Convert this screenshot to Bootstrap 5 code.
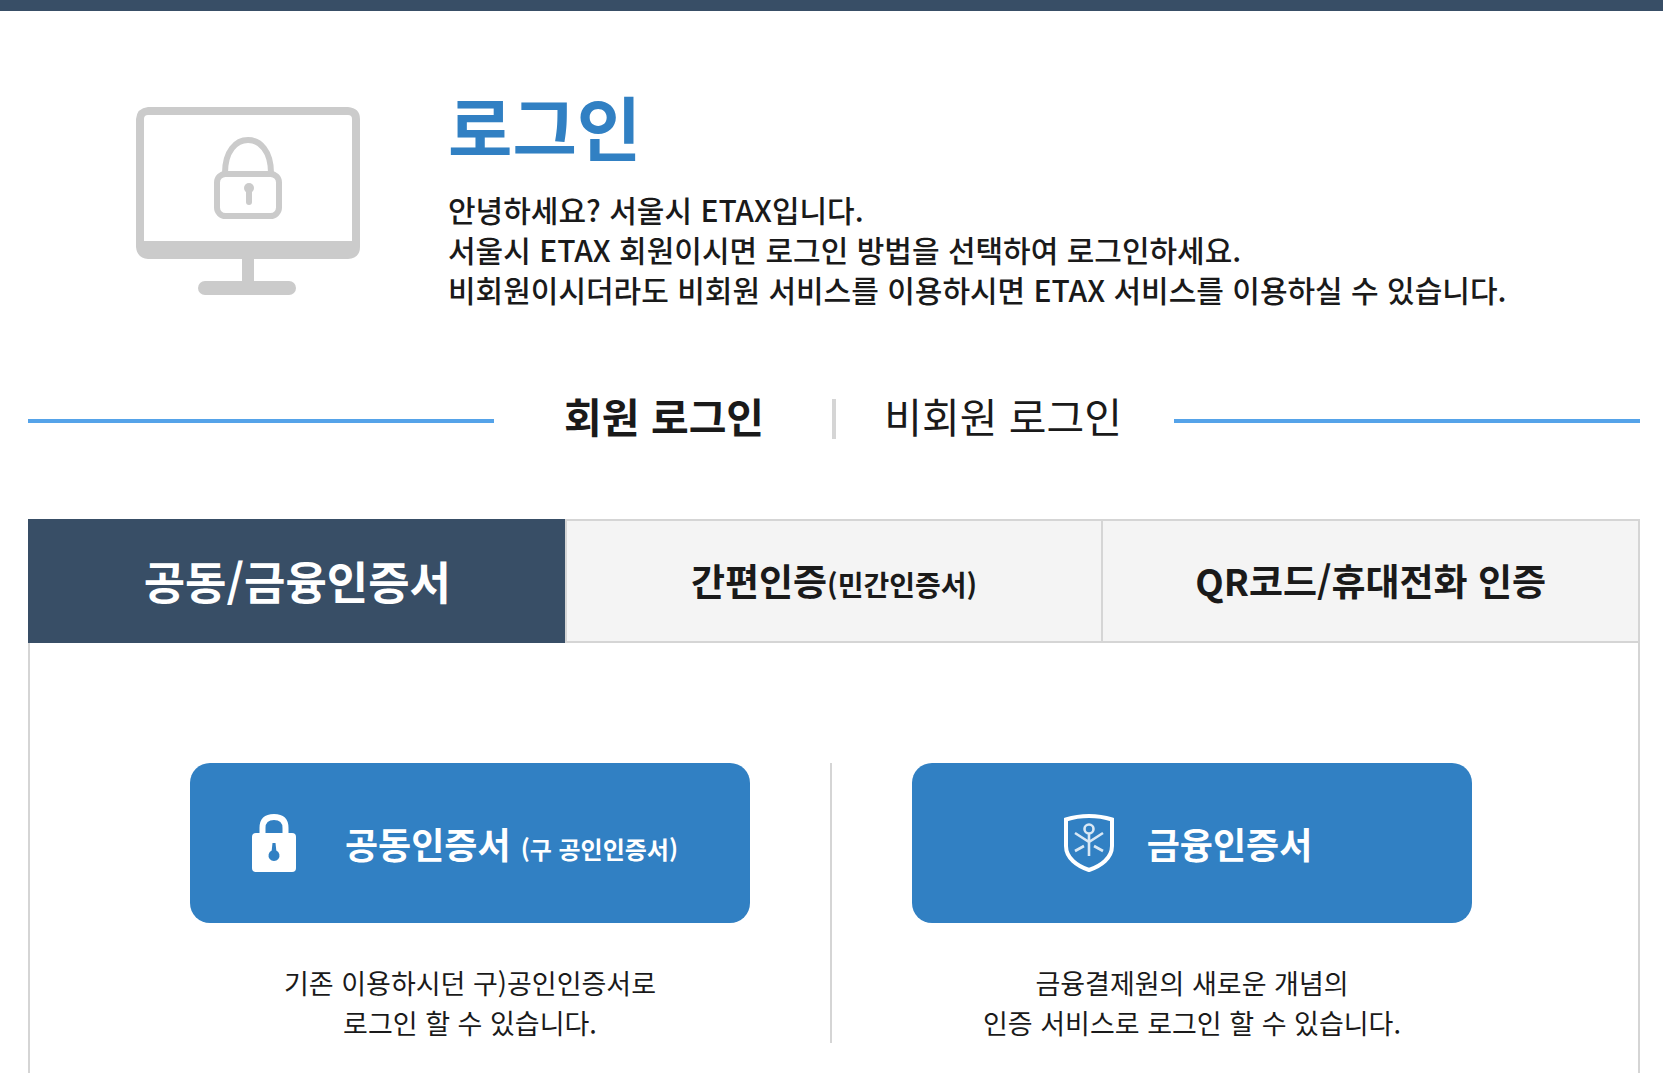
<!DOCTYPE html>
<html lang="ko">
<head>
<meta charset="utf-8">
<meta name="viewport" content="width=device-width, initial-scale=1">
<title>로그인 - 서울시 ETAX</title>
<link href="https://cdn.jsdelivr.net/npm/bootstrap@5.3.0/dist/css/bootstrap.min.css" rel="stylesheet">
<style>
  :root { --navy: #384e66; --blue: #3180c3; --sky: #55a3e9; --rule: #d5d5d5; --ink: #1a1a1a; }
  body { font-family: "Noto Sans CJK KR", "Noto Sans", sans-serif; color: var(--ink); background: #fff; word-break: keep-all; }
  .top-strip { height: 11px; background: var(--navy); }
  .page-wrap { padding: 0 23px 0 28px; }
  .intro { padding: 76px 100px 0 108px; gap: 88px; }
  .intro-art { width: 224px; margin-top: 20px; }
  .intro h1 { font-size: 70px; line-height: 78px; font-weight: 700; color: var(--blue); margin-bottom: 24px; }
  .intro p { font-size: 30px; line-height: 40px; font-weight: 500; }
  .kind-row { margin-top: 82px; height: 60px; }
  .kind-line { height: 4px; background: var(--sky); }
  .kind-links { width: 680px; font-size: 41px; line-height: 48px; padding: 0 52px 4px 70px; }
  .kind-links a { color: var(--ink); text-decoration: none; padding-bottom: 8px; }
  .kind-sep { width: 4px; height: 40px; background: var(--rule); margin-left: 20px; }
  .auth-tabs { margin-top: 68px; height: 124px; }
  .auth-tabs button { background: #f4f4f4; border: 2px solid var(--rule); border-right-width: 0; color: var(--ink); font-size: 37px; font-weight: 700; padding: 0; flex: 1 1 0; }
  .auth-tabs button:last-child { border-right-width: 2px; }
  .auth-tabs button.active { background: var(--navy); border-color: var(--navy); color: #fff; font-size: 45px; }
  .auth-tabs .sub { font-size: 28px; }
  .auth-panel { border: solid var(--rule); border-width: 0 2px; padding: 120px 166px 30px 160px; }
  .method-sep { width: 2px; height: 280px; background: var(--rule); margin: 0 80px; }
  .method-btn { height: 160px; border: 0; border-radius: 20px; background: var(--blue); color: #fff; font-size: 36px; font-weight: 700; }
  .method-btn .sub { font-size: 24px; }
  .method-btn svg { height: 58px; flex: none; }
  .gap-wide { gap: 49px; padding-right: 16px; }
  .gap-mid { gap: 33px; padding-right: 14px; }
  .method-note { font-size: 27px; line-height: 40px; margin: 40px 0 0; }
</style>
</head>
<body class="d-flex flex-column min-vh-100">
<div class="top-strip"></div>
<main class="page-wrap d-flex flex-column flex-grow-1">
  <header class="intro d-flex align-items-start">
    <svg class="intro-art flex-shrink-0" viewBox="0 0 224 188" fill="none" stroke="#cbcbcb" aria-hidden="true">
      <path d="M12 0H212Q224 1 224 12V140Q224 151 212 152H12Q1 151 0 140V12Q1 1 12 0ZM12 8Q8 8 8 12V134H216V12Q216 8 212 8Z" fill="#cbcbcb" fill-rule="evenodd" stroke="none"/>
      <path d="M106 150h12v26h-12z" fill="#cbcbcb" stroke="none"/>
      <rect x="62" y="174" width="98" height="14" rx="7" fill="#cbcbcb" stroke="none"/>
      <path d="M89 66C89 44 100 33 112 33S135 44 135 66" stroke-width="6"/>
      <rect x="81" y="67" width="62" height="42" rx="8.500" stroke-width="6"/>
      <circle cx="113" cy="81" r="5" fill="#cbcbcb" stroke="none"/>
      <path d="M113 83v12" stroke-width="6" stroke-linecap="round"/>
    </svg>
    <div>
      <h1>로그인</h1>
      <p class="mb-0">안녕하세요? 서울시 ETAX입니다.<br>서울시 ETAX 회원이시면 로그인 방법을 선택하여 로그인하세요.<br>비회원이시더라도 비회원 서비스를 이용하시면 ETAX 서비스를 이용하실 수 있습니다.</p>
    </div>
  </header>

  <nav class="kind-row d-flex align-items-center" aria-label="로그인 구분">
    <span class="kind-line flex-fill"></span>
    <div class="kind-links d-flex align-items-center justify-content-between flex-shrink-0">
      <a class="fw-bold" href="#member" aria-current="page">회원 로그인</a>
      <span class="kind-sep"></span>
      <a href="#guest">비회원 로그인</a>
    </div>
    <span class="kind-line flex-fill"></span>
  </nav>

  <div class="auth-tabs d-flex flex-shrink-0" role="tablist">
    <button type="button" class="active" role="tab" aria-selected="true">공동/금융인증서</button>
    <button type="button" role="tab" aria-selected="false">간편인증<span class="sub">(민간인증서)</span></button>
    <button type="button" role="tab" aria-selected="false">QR코드/휴대전화 인증</button>
  </div>

  <section class="auth-panel d-flex flex-grow-1 align-items-start" role="tabpanel">
    <div class="col text-center">
      <button type="button" class="method-btn gap-wide w-100 d-flex align-items-center justify-content-center">
        <svg viewBox="0 0 44 58" aria-hidden="true">
          <path d="M10.500 21V14Q10.500 3 22 3T33.500 14V21" fill="none" stroke="#fff" stroke-width="6"/>
          <rect y="19" width="44" height="39" rx="4" fill="#fff"/>
          <path d="M20.500 29h3l.8 7.500a5.500 5.500 0 1 1-4.600 0z" fill="#3180c3"/>
        </svg>
        <span>공동인증서 <span class="sub">(구 공인인증서)</span></span>
      </button>
      <p class="method-note">기존 이용하시던 구)공인인증서로<br>로그인 할 수 있습니다.</p>
    </div>
    <div class="method-sep"></div>
    <div class="col text-center">
      <button type="button" class="method-btn gap-mid w-100 d-flex align-items-center justify-content-center">
        <svg viewBox="0 0 50 58" fill="none" stroke="#fff" aria-hidden="true">
          <path d="M2 5.500Q13 2 25 2T48 5.500V32C48 44 37 52 25 56C13 52 2 44 2 32Z" stroke-width="4"/>
          <g stroke-width="2.600" stroke="#d9e8f5">
            <circle cx="25" cy="15" r="4.500"/>
            <path d="M25 20v22M11 19l14 9 14-9M11 37l9-5M39 37l-9-5"/>
          </g>
        </svg>
        <span>금융인증서</span>
      </button>
      <p class="method-note">금융결제원의 새로운 개념의<br>인증 서비스로 로그인 할 수 있습니다.</p>
    </div>
  </section>
</main>
<script src="https://cdn.jsdelivr.net/npm/bootstrap@5.3.0/dist/js/bootstrap.bundle.min.js"></script>
</body>
</html>
